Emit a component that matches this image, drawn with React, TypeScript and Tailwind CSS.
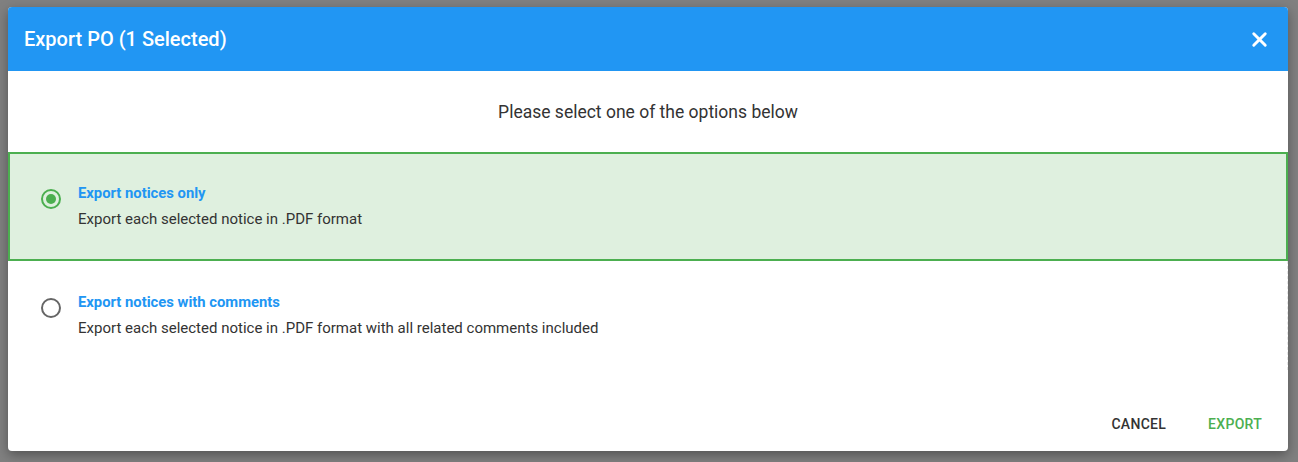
import { X } from "lucide-react";

const options = [
  {
    title: "Export notices only",
    description: "Export each selected notice in .PDF format",
    selected: true,
  },
  {
    title: "Export notices with comments",
    description: "Export each selected notice in .PDF format with all related comments included",
    selected: false,
  },
];

export default function App() {
  return (
    <div className="h-[462px] w-full bg-[#808080] pt-[7px] pl-[8px] font-['Roboto',sans-serif]">
      <div className="flex h-[444px] w-[1280px] flex-col overflow-hidden rounded-[4px] bg-white shadow-[0_4px_12px_rgba(0,0,0,0.35)]">
        {/* Header */}
        <div className="flex h-[64px] shrink-0 items-center justify-between bg-[#2196f3] pl-[16px] pr-[17px]">
          <h1 className="text-[20px] font-medium text-white">Export PO (1 Selected)</h1>
          <X className="h-[23px] w-[23px] text-white" strokeWidth={3} />
        </div>

        {/* Body */}
        <div className="flex-1">
          <p className="pt-[29px] pb-[28px] text-center text-[17.5px] leading-[24px] text-[#333]">
            Please select one of the options below
          </p>

          {options.map((opt) => (
            <div
              key={opt.title}
              className={
                opt.selected
                  ? "flex h-[109px] items-center border-2 border-[#4caf50] bg-[#dff0df] pb-[2px] pl-[31px]"
                  : "flex h-[109px] items-center border-r border-dashed border-r-[#e4e4e4] pb-[2px] pl-[33px]"
              }
            >
              <div className="flex items-start gap-[17px]">
                <div
                  className={
                    opt.selected
                      ? "mt-[6px] flex h-[20px] w-[20px] items-center justify-center rounded-full border-2 border-[#4caf50]"
                      : "mt-[6px] h-[20px] w-[20px] rounded-full border-2 border-[#666]"
                  }
                >
                  {opt.selected && <div className="h-[10px] w-[10px] rounded-full bg-[#4caf50]" />}
                </div>
                <div>
                  <div className="text-[14.8px] font-bold leading-[20px] text-[#2196f3]">{opt.title}</div>
                  <div className="mt-[6px] text-[15px] leading-[20px] text-[#333]">{opt.description}</div>
                </div>
              </div>
            </div>
          ))}
        </div>

        {/* Footer */}
        <div className="flex h-[64px] shrink-0 items-end justify-end gap-[10px] pr-[10px] pb-[9px]">
          <button className="h-[36px] rounded px-[16px] text-[14px] font-medium uppercase tracking-[0.02em] text-[#333]">
            Cancel
          </button>
          <button className="h-[36px] rounded px-[16px] text-[14px] font-medium uppercase tracking-[0.02em] text-[#4caf50]">
            Export
          </button>
        </div>
      </div>
    </div>
  );
}
